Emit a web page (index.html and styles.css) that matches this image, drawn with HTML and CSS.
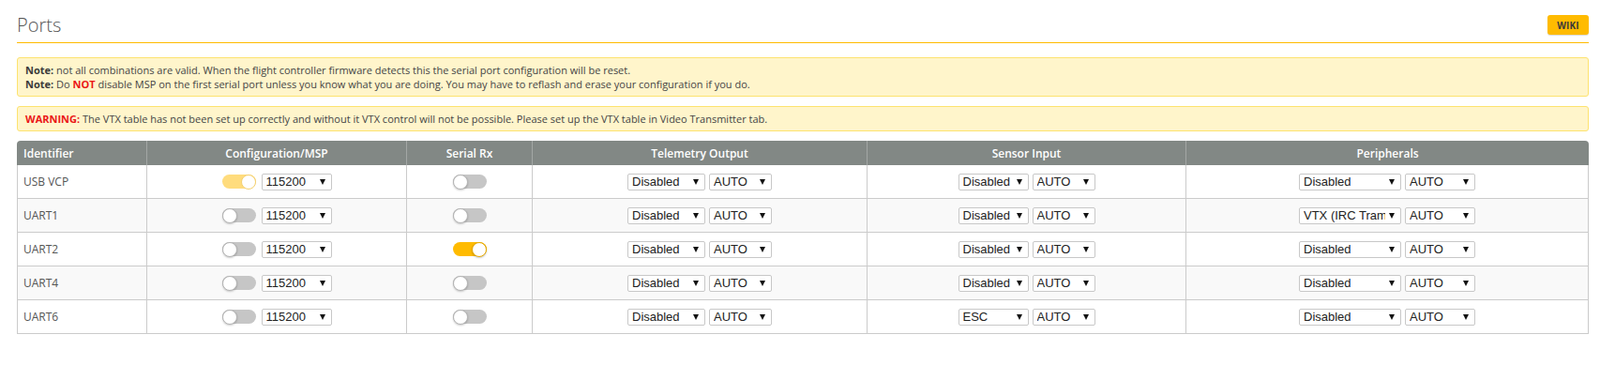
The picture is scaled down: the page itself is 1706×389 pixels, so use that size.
FILE: index.html
```html
<!DOCTYPE html>
<html lang="en">
<head>
    <meta charset="UTF-8">
    <title>Ports</title>
    <link rel="stylesheet" href="styles.css">
</head>
<body>
    <div class="tab-ports">
        <div class="tab-header">
            <span class="tab-title">Ports</span>
            <a class="wiki-btn" href="#">WIKI</a>
        </div>

        <div class="note">
            <p><strong>Note:</strong> not all combinations are valid. When the flight controller firmware detects this the serial port configuration will be reset.</p>
            <p><strong>Note:</strong> Do <span class="negative">NOT</span> disable MSP on the first serial port unless you know what you are doing. You may have to reflash and erase your configuration if you do.</p>
        </div>

        <div class="note warning">
            <p><span class="negative">WARNING:</span> The VTX table has not been set up correctly and without it VTX control will not be possible. Please set up the VTX table in Video Transmitter tab.</p>
        </div>

        <table class="ports">
            <colgroup>
                <col class="c-id">
                <col class="c-msp">
                <col class="c-rx">
                <col class="c-telem">
                <col class="c-sensor">
                <col class="c-periph">
            </colgroup>
            <thead>
                <tr>
                    <th class="left">Identifier</th>
                    <th>Configuration/MSP</th>
                    <th>Serial Rx</th>
                    <th>Telemetry Output</th>
                    <th>Sensor Input</th>
                    <th>Peripherals</th>
                </tr>
            </thead>
            <tbody id="portRows"></tbody>
        </table>
    </div>

    <script>
        const ports = [
            { id: 'USB VCP', msp: 'locked', rx: false, sensor: 'Disabled', periph: 'Disabled' },
            { id: 'UART1', msp: 'off', rx: false, sensor: 'Disabled', periph: 'VTX (IRC Tramp)' },
            { id: 'UART2', msp: 'off', rx: true, sensor: 'Disabled', periph: 'Disabled' },
            { id: 'UART4', msp: 'off', rx: false, sensor: 'Disabled', periph: 'Disabled' },
            { id: 'UART6', msp: 'off', rx: false, sensor: 'ESC', periph: 'Disabled' }
        ];

        function toggle(state) {
            return `<span class="switch ${state}"><span class="knob"></span></span>`;
        }

        function select(value, size) {
            return `<span class="sel ${size}"><select><option>${value}</option></select></span>`;
        }

        const rows = document.getElementById('portRows');
        rows.innerHTML = ports.map(p => `
            <tr>
                <td class="left">${p.id}</td>
                <td><div class="controls wide">${toggle(p.msp)}${select('115200', 'w75')}</div></td>
                <td><div class="controls">${toggle(p.rx ? 'on' : 'off')}</div></td>
                <td><div class="controls">${select('Disabled', 'w83')}${select('AUTO', 'w67')}</div></td>
                <td><div class="controls">${select(p.sensor, 'w75')}${select('AUTO', 'w67')}</div></td>
                <td><div class="controls">${select(p.periph, 'w109')}${select('AUTO', 'w75')}</div></td>
            </tr>`).join('');
    </script>
</body>
</html>
```

FILE: styles.css
```css
body {
    margin: 0;
    background: #fff;
    font-family: "Open Sans", "Liberation Sans", sans-serif;
    color: #333;
}
.tab-ports {
    padding: 8px 12px 0 18px;
}
.tab-header {
    display: flex;
    justify-content: space-between;
    align-items: center;
    height: 37px;
    border-bottom: 1px solid #ffbb00;
}
.tab-title {
    font-size: 20px;
    font-weight: 300;
    line-height: 24px;
    color: #555;
}
.wiki-btn {
    display: flex;
    align-items: center;
    justify-content: center;
    width: 44px;
    height: 21px;
    background: #ffbb00;
    border-radius: 3px;
    box-shadow: 0 1px 1px rgba(0, 0, 0, 0.15);
    color: #3a3a3a;
    font-size: 10px;
    font-weight: 700;
    letter-spacing: 0.2px;
    text-decoration: none;
}
.note {
    margin-top: 15px;
    padding: 5px 8px;
    background: #fff5cb;
    border: 1px solid #fde36f;
    border-radius: 3px;
    font-size: 11px;
    line-height: 15px;
    color: #444;
}
.note p {
    margin: 0;
}
.note strong {
    font-weight: 700;
    color: #3a3a3a;
}
.note.warning {
    margin-top: 10px;
}
.negative {
    color: #ea1717;
    font-weight: 700;
}
table.ports {
    margin-top: 10px;
    width: 100%;
    table-layout: fixed;
    border-collapse: separate;
    border-spacing: 0;
}
col.c-id { width: 138px; }
col.c-msp { width: 277px; }
col.c-rx { width: 134px; }
col.c-telem { width: 357px; }
col.c-sensor { width: 340px; }
col.c-periph { width: 430px; }
.ports th {
    height: 26px;
    padding: 0;
    background: #828885;
    color: #fff;
    font-size: 12px;
    font-weight: 600;
    text-align: center;
    border-left: 1px solid #a3a7a5;
}
.ports th:first-child {
    border-left: none;
    border-top-left-radius: 4px;
}
.ports th:last-child {
    border-top-right-radius: 4px;
}
.ports th.left {
    text-align: left;
    padding-left: 7px;
}
.ports td {
    height: 35px;
    padding: 0;
    border-left: 1px solid #cbcbcb;
    border-bottom: 1px solid #cbcbcb;
    font-size: 12px;
    color: #555;
}
.ports td:last-child {
    border-right: 1px solid #cbcbcb;
}
.ports td.left {
    padding-left: 6px;
}
.ports tbody tr:nth-child(even) td {
    background: #f9f9f9;
}
.controls {
    display: flex;
    justify-content: center;
    align-items: center;
    gap: 4px;
}
.controls.wide {
    gap: 6px;
}
.switch {
    display: flex;
    align-items: center;
    width: 36px;
    height: 15px;
    border-radius: 8px;
    background: #c6c6c6;
}
.switch .knob {
    width: 16px;
    height: 16px;
    box-sizing: border-box;
    border-radius: 50%;
    background: #fff;
    border: 1px solid #b4b4b4;
    box-shadow: 0 1px 2px rgba(0, 0, 0, 0.2);
}
.switch.on,
.switch.locked {
    justify-content: flex-end;
    background: #ffbb00;
}
.switch.on .knob {
    border-color: #e5a800;
}
.switch.locked {
    background: #ffdc7d;
}
.switch.locked .knob {
    border-color: #f3d070;
    box-shadow: none;
}
.sel {
    position: relative;
    display: block;
    height: 18px;
}
.sel select {
    appearance: none;
    -webkit-appearance: none;
    width: 100%;
    height: 18px;
    margin: 0;
    padding: 0 16px 0 4px;
    background: #fff;
    border: 1px solid #c8c8c8;
    border-radius: 2px;
    font-family: "Liberation Sans", Arial, sans-serif;
    font-size: 13px;
    line-height: 16px;
    color: #222;
}
.sel::after {
    content: "";
    position: absolute;
    right: 7px;
    top: 6px;
    border-left: 3px solid transparent;
    border-right: 3px solid transparent;
    border-top: 6px solid #111;
    pointer-events: none;
}
.w67 { width: 67px; }
.w75 { width: 75px; }
.w83 { width: 83px; }
.w109 { width: 109px; }
```
